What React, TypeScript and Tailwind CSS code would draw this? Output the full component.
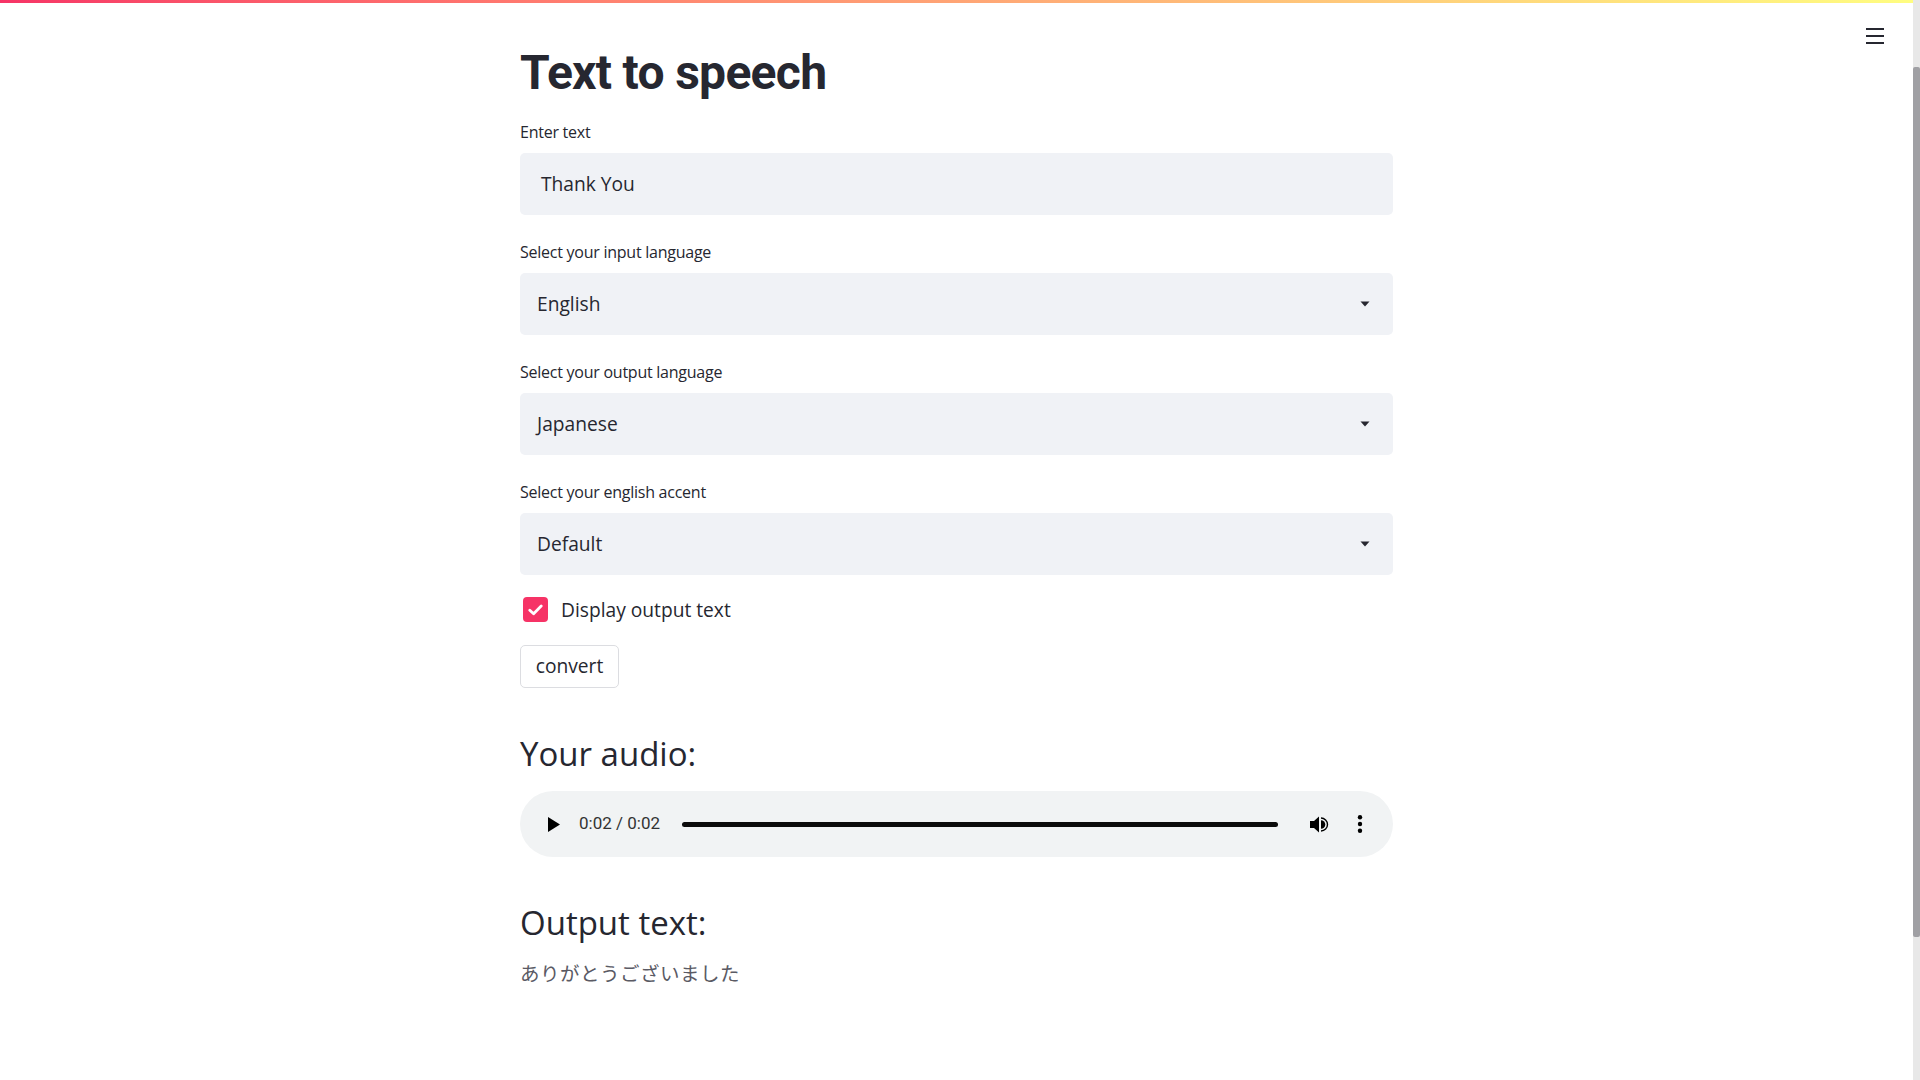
import React from "react";

function Caret() {
  return (
    <svg width="10" height="6" viewBox="0 0 10 6" className="block">
      <polygon points="0.5,0.5 9.5,0.5 5,5.5" fill="#262730" />
    </svg>
  );
}

function Field({ label, value, select, first }: { label: string; value: string; select?: boolean; first?: boolean }) {
  return (
    <div className={first ? "mt-[15px]" : "mt-[25px]"}>
      <div className="h-[24px] text-[16px] leading-[24px] tracking-[-0.25px] text-[#262730]">{label}</div>
      <div
        className={
          "mt-[9px] flex h-[62px] items-center justify-between rounded-[5px] bg-[#f0f2f6] text-[19.2px] text-[#262730] " +
          (select ? "pl-[17px] pr-[23px]" : "pl-[21px] pr-[20px]")
        }
      >
        <span>{value}</span>
        {select && <Caret />}
      </div>
    </div>
  );
}

export default function App() {
  return (
    <div className="flex h-[1080px] w-full overflow-hidden bg-white font-['Open_Sans',sans-serif] text-[#262730]">
      <div className="relative flex flex-1 flex-col">
        <div className="h-[3px] w-full bg-linear-to-r from-[#f63366] to-[#fffd80]" />
        <button className="absolute right-[29px] top-[28px] flex w-[18px] flex-col gap-[5px]">
          <span className="block h-[2px] w-full bg-[#262730]" />
          <span className="block h-[2px] w-full bg-[#262730]" />
          <span className="block h-[2px] w-full bg-[#262730]" />
        </button>
        <main className="mx-auto w-[873px] pt-[38px]">
          <h1 className="h-[64px] font-['Roboto',sans-serif] text-[48px] font-bold leading-[64px] tracking-[-0.7px] text-[#262730]">Text to speech</h1>
          <Field first label="Enter text" value="Thank You" />
          <Field select label="Select your input language" value="English" />
          <Field select label="Select your output language" value="Japanese" />
          <Field select label="Select your english accent" value="Default" />

          <div className="mt-[22px] flex h-[25px] items-center">
            <div className="ml-[3px] flex h-[25px] w-[25px] items-center justify-center rounded-[4px] bg-[#f63366]">
              <svg width="15" height="12" viewBox="0 0 15 12">
                <path d="M1.8 6.2 L5.6 9.8 L13.2 2" fill="none" stroke="white" strokeWidth="2.8" strokeLinecap="round" strokeLinejoin="round" />
              </svg>
            </div>
            <span className="ml-[13px] text-[19.2px] leading-[25px]">Display output text</span>
          </div>

          <button className="mt-[23px] flex h-[43px] w-[99px] items-center justify-center rounded-[5px] border border-[#dcdde1] bg-white text-[19.2px] text-[#262730]">
            convert
          </button>

          <h3 className="mt-[44px] h-[44px] text-[33px] font-normal leading-[44px] text-[#262730]">Your audio:</h3>

          <div className="mt-[15px] flex h-[66px] items-center rounded-full bg-[#f1f3f4]">
            <svg width="12" height="15" viewBox="0 0 12 15" className="ml-[28px] block shrink-0">
              <polygon points="0,0 12,7.5 0,15" fill="#000" />
            </svg>
            <span className="ml-[19px] shrink-0 font-['Roboto',sans-serif] text-[17px] text-[#333]">0:02 / 0:02</span>
            <div className="ml-[22px] h-[5px] flex-1 rounded-full bg-[#0b0b0b]" />
            <svg width="20" height="17" viewBox="0 0 20 17" className="ml-[32px] block shrink-0">
              <path d="M0 5 H4 L9 0.5 V16.5 L4 12 H0 Z" fill="#000" />
              <path d="M11 4.2 A4.3 4.3 0 0 1 11 12.8 Z" fill="#000" />
              <path d="M11 2 A6.5 6.5 0 0 1 11 15" fill="none" stroke="#000" strokeWidth="1.4" />
            </svg>
            <svg width="6" height="18" viewBox="0 0 6 18" className="ml-[27px] mr-[30px] block shrink-0">
              <circle cx="3" cy="2.2" r="2.2" fill="#000" />
              <circle cx="3" cy="9" r="2.2" fill="#000" />
              <circle cx="3" cy="15.8" r="2.2" fill="#000" />
            </svg>
          </div>

          <h3 className="mt-[44px] h-[44px] text-[33px] font-normal leading-[44px] text-[#262730]">Output text:</h3>
          <p className="mt-[14px] font-['Noto_Sans_CJK_JP',sans-serif] text-[19.5px] leading-[28px] tracking-[0.5px] text-[#5a5a64]">
            ありがとうございました
          </p>
        </main>
      </div>
      <div className="flex w-[7px] flex-col bg-[#e8e8e8] pt-[67px]">
        <div className="h-[870px] w-full rounded-[2px] bg-[#a0a0a4]" />
      </div>
    </div>
  );
}
